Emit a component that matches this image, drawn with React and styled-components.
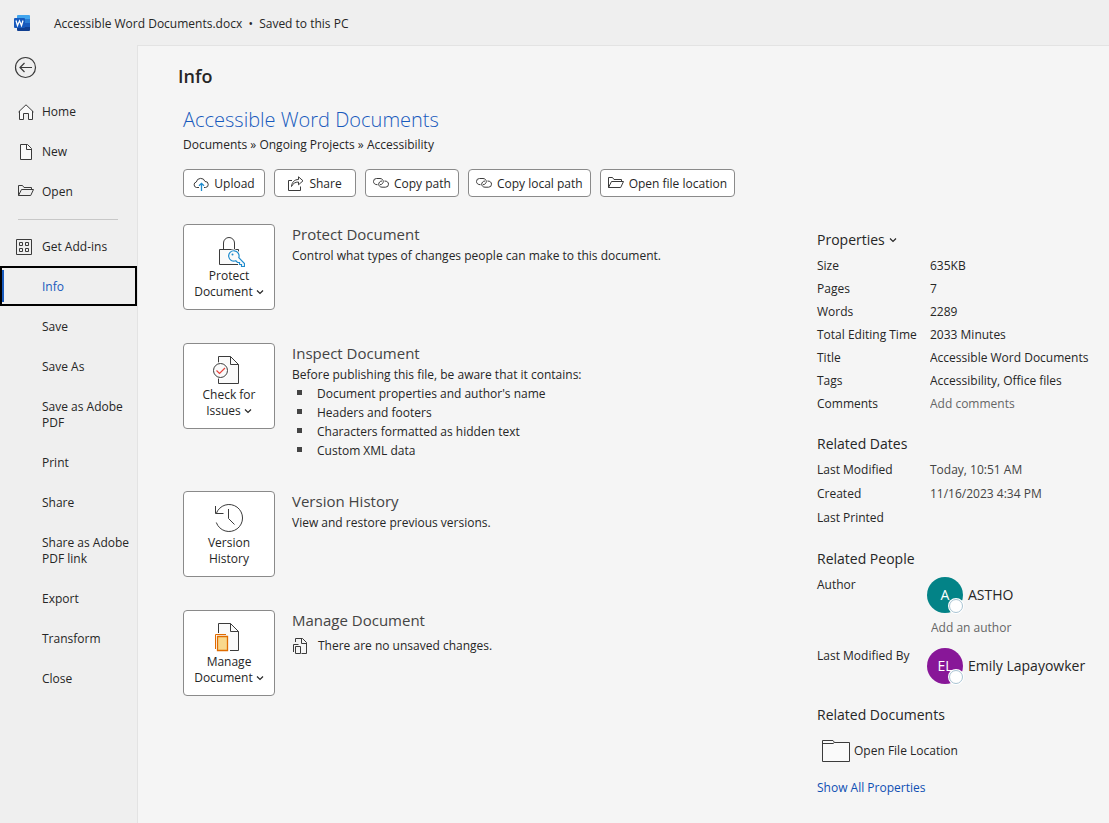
import React from "react";

import styled, { createGlobalStyle, css } from "styled-components";

const GlobalStyle = createGlobalStyle`
* {
  box-sizing: border-box;
}

body {
  margin: 0;
  background: #efefef;
  color: #262626;
  font-family: "Open Sans", "Noto Sans", sans-serif;
  font-size: 12px;
  line-height: 16px;
}

button, input {
  font: inherit;
  color: inherit;
}

h1, h2, h3, p, ul {
  margin: 0;
  padding: 0;
}
`;

const Page = styled.div`
display: flex;
flex-direction: column;
min-height: 100vh;
`;

const TitleBar = styled.header`
display: flex;
align-items: center;
gap: 24px;
height: 45px;
padding-left: 14px;
`;

const FileName = styled.span`
padding-top: 2px;
`;

const Body = styled.div`
display: flex;
flex: 1;
`;

const Sidebar = styled.nav`
display: flex;
flex-direction: column;
width: 137px;
flex-shrink: 0;
`;

const BackButton = styled.button`
display: flex;
align-items: center;
height: 46px;
padding: 0 14px 1px;
border: none;
background: none;
`;

const NavItem = styled.button`
display: grid;
grid-template-columns: 16px 1fr;
column-gap: 10px;
align-items: center;
min-height: 40px;
padding: 13px 4px 11px 16px;
border: none;
background: none;
text-align: left;

span {
  grid-column: 2;
}

svg {
  margin: -2px 0;
}

${(props) => props.$active && css`
  padding: 11px 4px 9px 14px;
  border: 2px solid black;
  color: #185abd;
  background: linear-gradient(#185abd, #185abd) 0 center / 2px 32px no-repeat;
`}
`;

const NavDivider = styled.hr`
width: 100px;
height: 1px;
margin: 8px 18px 6px;
border: none;
background: #c8c8c8;
`;

const Main = styled.main`
flex: 1;
padding: 18px 0 20px 45px;
border-top: 1px solid #e3e3e3;
border-left: 1px solid #e3e3e3;
background: #f5f5f5;
`;

const PageHeading = styled.h1`
margin-left: -5px;
font-size: 18px;
line-height: 24px;
font-weight: 600;
`;

const DocTitle = styled.h2`
margin-top: 16px;
color: #185abd;
font-size: 20px;
line-height: 32px;
font-weight: 300;
`;

const Breadcrumb = styled.p`
margin-top: 1px;
`;

const Toolbar = styled.div`
display: flex;
flex-wrap: wrap;
gap: 9px;
margin-top: 16px;
`;

const ToolButton = styled.button`
display: flex;
align-items: center;
justify-content: center;
gap: 5px;
min-width: 82px;
height: 28px;
padding: 2px 7px 0;
border: 1px solid #8a8a8a;
border-radius: 4px;
background: white;
white-space: nowrap;
`;

const Columns = styled.div`
display: grid;
grid-template-columns: 1fr 292px;
margin-top: 27px;
`;

const Sections = styled.div`
display: flex;
flex-direction: column;
gap: 31px;
`;

const Section = styled.section`
display: flex;
gap: 17px;
min-height: 88px;
`;

const Tile = styled.button`
display: flex;
flex-direction: column;
align-items: center;
justify-content: center;
width: 92px;
height: 86px;
flex-shrink: 0;
padding: 2px 0 0;
border: 1px solid #8a8a8a;
border-radius: 4px;
background: white;
font-weight: 500;
`;

const SectionTitle = styled.h3`
padding-bottom: 4px;
color: #444;
font-size: 15px;
line-height: 20px;
font-weight: 500;
`;

const IssueList = styled.ul`
padding-top: 1px;
list-style: none;

li {
  display: flex;
  align-items: center;
  gap: 15px;
  height: 19px;
  padding-left: 5px;
}

li::before {
  content: "";
  width: 5px;
  height: 5px;
  margin-bottom: 2px;
  background: #444;
}
`;

const Unsaved = styled.p`
display: flex;
align-items: center;
gap: 10px;
padding-top: 3px;
`;

const Side = styled.aside`
padding-top: 5px;
`;

const SideHeading = styled.h3`
padding-top: ${(props) => (props.$spaced ? "18px" : "0")};
font-size: 14px;
line-height: 22px;
font-weight: 400;

button {
  display: flex;
  align-items: center;
  gap: 4px;
  padding: 0;
  border: none;
  background: none;
}
`;

const PropTable = styled.table`
width: 100%;
margin-top: 3px;
border-collapse: collapse;

th, td {
  height: ${(props) => (props.$dates ? "24px" : "23px")};
  padding: 0;
  text-align: left;
  font-weight: 400;
}

th {
  width: 113px;
  white-space: nowrap;
}

td {
  color: ${(props) => (props.$dates ? "#444" : "#262626")};
}
`;

const Field = styled.input`
display: block;
width: 100%;
height: 16px;
padding: 0;
border: none;
background: none;

&::placeholder {
  color: #666;
  opacity: 1;
}
`;

const People = styled.div`
padding-bottom: 2px;
`;

const PersonRow = styled.div`
display: grid;
grid-template-columns: 110px 1fr;
padding-top: 7px;
`;

const Person = styled.div`
display: flex;
align-items: center;
gap: 5px;
font-size: 14px;
white-space: nowrap;
`;

const Avatar = styled.div`
position: relative;
width: 36px;
height: 36px;
flex-shrink: 0;
border-radius: 50%;
background: ${(props) => props.$color};
color: white;
font-size: 14px;
line-height: 36px;
text-align: center;

&::after {
  content: "";
  position: absolute;
  right: 0;
  bottom: 0;
  width: 12px;
  height: 12px;
  border: 1px solid #a9c4d3;
  border-radius: 50%;
  background: white;
  box-shadow: 0 0 0 1px white;
}
`;

const AuthorField = styled(Field)`
margin: 7px 0 5px 4px;
`;

const FolderButton = styled.button`
display: flex;
align-items: center;
gap: 4px;
margin-top: 14px;
padding: 0 0 0 5px;
border: none;
background: none;
`;

const ShowAll = styled.a`
display: inline-block;
margin-top: 18px;
color: #0f4fb3;
text-decoration: none;
`;

const ChevronSvg = styled.svg`
vertical-align: 1px;
`;

const Icon = ({ w = 16, h = 16, children }) => (
  <svg width={w} height={h} viewBox={`0 0 ${w} ${h}`} fill="none" stroke="#3b3b3b" aria-hidden="true">
    {children}
  </svg>
);

const WordLogo = () => (
  <svg width="16" height="16" viewBox="0 0 16 16" role="img" aria-label="Word">
    <path d="M4 0h11a1 1 0 0 1 1 1v3H3V1a1 1 0 0 1 1-1z" fill="#41a5ee" />
    <path d="M3 4h13v4H3z" fill="#2b7cd3" />
    <path d="M3 8h13v4H3z" fill="#185abd" />
    <path d="M3 12h13v3a1 1 0 0 1-1 1H4a1 1 0 0 1-1-1z" fill="#103f91" />
    <rect y="3" width="11" height="10" rx="1" fill="#185abd" />
    <path d="M2 5.500 3.500 10.500 5.500 5.800 7.500 10.500 9 5.500" fill="none" stroke="white" strokeWidth="1.300" />
  </svg>
);

const BackIcon = () => (
  <Icon w={23} h={23}>
    <circle cx="11.5" cy="11.5" r="10" strokeWidth="1.2" />
    <path d="M18 11.5H6M10.5 7 6 11.5l4.5 4.5" strokeWidth="1.2" />
  </Icon>
);

const HomeIcon = () => (
  <Icon w={20}>
    <path d="M3.500 7 10 1l6.500 6v8.500h-4v-6h-5v6h-4z" fill="#fafafa" stroke="none" />
    <path d="M2.500 8 10 .8 17.500 8" />
    <path d="M3.500 7v8.500h4v-6h5v6h4V7" />
  </Icon>
);

const NewIcon = () => (
  <Icon w={20}>
    <path d="M4.500.500h7l4 4v11h-11z" fill="#fafafa" />
    <path d="M10.500.500v5h5" />
  </Icon>
);

const openPath = "M.500 11.500v-10h4l1.500 2h7.500v2M.500 11.500l3-6h12l-2.800 6z";

const OpenIcon = () => (
  <Icon>
    <path d={openPath} />
  </Icon>
);

const NavOpenIcon = () => (
  <Icon w={20}>
    <path d={openPath} transform="translate(2 0)" />
  </Icon>
);

const AddinsIcon = () => (
  <Icon>
    <path d="M.5.5h15v15H.5zM3.500 3.500h3v3h-3zM9.500 3.500h3v3h-3zM3.500 9.500h3v3h-3zM9.500 9.500h3v3h-3z" />
  </Icon>
);

const UploadIcon = () => (
  <Icon>
    <path d="M6 11.500H3.500A2.800 2.800 0 0 1 3.300 6 4.500 4.500 0 0 1 12 5.500 3 3 0 0 1 12.500 11.500H11" />
    <path d="M8.500 15V7.500M6 9.800 8.500 7.300 11 9.800" stroke="#1e8bcd" strokeWidth="1.300" />
  </Icon>
);

const ShareIcon = () => (
  <Icon>
    <path d="M4 4.500H.500v10h12V10.500" />
    <path d="M3.500 10.500C4 6 6.500 3.500 10.500 3.500V.800L15 4.800 10.500 8.800V6C7 6 5 7.500 3.500 10.500z" />
  </Icon>
);

const LinkIcon = () => (
  <Icon>
    <path d="M4.500 8.700C1.800 8.700.5 7.300.5 5.500A3 3 0 0 1 3.500 2.500H7C9 2.500 10.300 4 10.300 5.500S9 8.700 7 8.700" />
    <path d="M11.500 5C14.200 5 15.500 6.400 15.500 8.200A3 3 0 0 1 12.500 11.200H9C7 11.200 5.700 9.700 5.700 8.200S7 5 9 5" />
  </Icon>
);

const Chevron = () => (
  <ChevronSvg width="8" height="6" viewBox="0 0 8 6" fill="none" stroke="#262626" strokeWidth="1.2" aria-hidden="true">
    <path d="M1 1.500 4 4.500 7 1.500" />
  </ChevronSvg>
);

const LockIcon = () => (
  <Icon w={32} h={32}>
    <path d="M10.500 13.500V7a5.500 5.500 0 0 1 11 0v6.500" />
    <path d="M6.500 13.500h19v15h-19z" fill="#fafafa" />
    <path d="M22.800 24.800a5.200 5.200 0 1 1 3-3.200L31.500 27.500v3h-3v-2h-2v-2h-2z" fill="white" stroke="white" strokeWidth="3" />
    <path d="M22.800 24.800a5.200 5.200 0 1 1 3-3.200L31.500 27.500v3h-3v-2h-2v-2h-2z" fill="#fafafa" stroke="#1e8bcd" strokeWidth="1.200" />
    <circle cx="19.500" cy="18.500" r="1" fill="#1e8bcd" stroke="none" />
  </Icon>
);

const InspectIcon = () => (
  <Icon w={32} h={32}>
    <path d="M5.500 1.500h12l8 8v19h-20z" fill="#fafafa" />
    <path d="M17.500 1.500v8h8" />
    <circle cx="7.500" cy="15.500" r="8.500" fill="white" stroke="none" />
    <circle cx="7.500" cy="15.500" r="7" fill="#fafafa" />
    <path d="M3.500 15.500 6.500 18.500 12 13" stroke="#e8433c" strokeWidth="1.200" />
  </Icon>
);

const HistoryIcon = () => (
  <Icon w={32} h={32}>
    <path d="M2.500 3v7.500h8" />
    <path d="M3.300 10.500A13.500 13.500 0 1 1 3.300 19.500" />
    <path d="M15.500 6v9.500l6 6" />
  </Icon>
);

const ManageIcon = () => (
  <Icon w={32} h={32}>
    <path d="M5.500 1.500h12l8 8v19h-20z" fill="#fafafa" stroke="none" />
    <path d="M5.500 11V1.500h12l8 8v19H17" />
    <path d="M17.500 1.500v8h8" />
    <path d="M2.500 27V12.500H13" stroke="#e06c00" />
    <path d="M4.500 14.500h10v14h-10z" fill="#f9d88c" stroke="#e06c00" strokeWidth="1.300" />
  </Icon>
);

const DraftIcon = () => (
  <Icon w={16} h={18}>
    <path d="M3.500 5V1.500h7l4 4v11h-5M9.500 1.500v5h5" />
    <path d="M1.500 15V7.500h5M3.500 9.500h5v7h-5z" />
  </Icon>
);

const FolderIcon = () => (
  <Icon w={28} h={22}>
    <path d="M.5.500h10.500l1.500 2h15v19H.500z" fill="#fafafa" />
    <path d="M.5 3.500h10.500l1.500-1" />
  </Icon>
);

const fileItems = [
  "Save",
  "Save As",
  "Save as Adobe PDF",
  "Print",
  "Share",
  "Share as Adobe PDF link",
  "Export",
  "Transform",
  "Close",
];

const issues = [
  "Document properties and author's name",
  "Headers and footers",
  "Characters formatted as hidden text",
  "Custom XML data",
];

const stats = [
  ["Size", "635KB"],
  ["Pages", "7"],
  ["Words", "2289"],
  ["Total Editing Time", "2033 Minutes"],
];

const dates = [
  ["Last Modified", "Today, 10:51 AM"],
  ["Created", "11/16/2023 4:34 PM"],
  ["Last Printed", ""],
];

const Navigation = () => (
  <Sidebar>
    <BackButton aria-label="Back"><BackIcon /></BackButton>
    <NavItem><HomeIcon /><span>Home</span></NavItem>
    <NavItem><NewIcon /><span>New</span></NavItem>
    <NavItem><NavOpenIcon /><span>Open</span></NavItem>
    <NavDivider />
    <NavItem><AddinsIcon /><span>Get Add-ins</span></NavItem>
    <NavItem $active aria-current="page"><span>Info</span></NavItem>
    {fileItems.map((item) => (
      <NavItem key={item}><span>{item}</span></NavItem>
    ))}
  </Sidebar>
);

const Properties = () => (
  <Side>
    <SideHeading><button>Properties <Chevron /></button></SideHeading>
    <PropTable>
      <tbody>
        {stats.map(([name, value]) => (
          <tr key={name}><th scope="row">{name}</th><td>{value}</td></tr>
        ))}
        <tr>
          <th scope="row"><label htmlFor="title">Title</label></th>
          <td><Field id="title" defaultValue="Accessible Word Documents" /></td>
        </tr>
        <tr>
          <th scope="row"><label htmlFor="tags">Tags</label></th>
          <td><Field id="tags" defaultValue="Accessibility, Office files" /></td>
        </tr>
        <tr>
          <th scope="row"><label htmlFor="comments">Comments</label></th>
          <td><Field id="comments" placeholder="Add comments" /></td>
        </tr>
      </tbody>
    </PropTable>

    <SideHeading $spaced>Related Dates</SideHeading>
    <PropTable $dates>
      <tbody>
        {dates.map(([name, value]) => (
          <tr key={name}><th scope="row">{name}</th><td>{value}</td></tr>
        ))}
      </tbody>
    </PropTable>

    <SideHeading $spaced>Related People</SideHeading>
    <People>
      <PersonRow>
        <label htmlFor="author">Author</label>
        <div>
          <Person><Avatar $color="#038387">A</Avatar>ASTHO</Person>
          <AuthorField id="author" placeholder="Add an author" />
        </div>
      </PersonRow>
      <PersonRow>
        <span>Last Modified By</span>
        <Person><Avatar $color="#881798">EL</Avatar>Emily Lapayowker</Person>
      </PersonRow>
    </People>

    <SideHeading $spaced>Related Documents</SideHeading>
    <FolderButton><FolderIcon />Open File Location</FolderButton>
    <ShowAll href="#properties">Show All Properties</ShowAll>
  </Side>
);

const App = () => {
  return (
    <>
      <GlobalStyle />
      <Page>
        <TitleBar>
          <WordLogo />
          <FileName>Accessible Word Documents.docx &nbsp;•&nbsp; Saved to this PC</FileName>
        </TitleBar>

        <Body>
          <Navigation />

          <Main>
            <PageHeading>Info</PageHeading>
            <DocTitle>Accessible Word Documents</DocTitle>
            <Breadcrumb>Documents » Ongoing Projects » Accessibility</Breadcrumb>

            <Toolbar>
              <ToolButton><UploadIcon />Upload</ToolButton>
              <ToolButton><ShareIcon />Share</ToolButton>
              <ToolButton><LinkIcon />Copy path</ToolButton>
              <ToolButton><LinkIcon />Copy local path</ToolButton>
              <ToolButton><OpenIcon />Open file location</ToolButton>
            </Toolbar>

            <Columns>
              <Sections>
                <Section>
                  <Tile>
                    <LockIcon />
                    <span>Protect</span>
                    <span>Document <Chevron /></span>
                  </Tile>
                  <div>
                    <SectionTitle>Protect Document</SectionTitle>
                    <p>Control what types of changes people can make to this document.</p>
                  </div>
                </Section>

                <Section>
                  <Tile>
                    <InspectIcon />
                    <span>Check for</span>
                    <span>Issues <Chevron /></span>
                  </Tile>
                  <div>
                    <SectionTitle>Inspect Document</SectionTitle>
                    <p>Before publishing this file, be aware that it contains:</p>
                    <IssueList>
                      {issues.map((issue) => <li key={issue}>{issue}</li>)}
                    </IssueList>
                  </div>
                </Section>

                <Section>
                  <Tile>
                    <HistoryIcon />
                    <span>Version</span>
                    <span>History</span>
                  </Tile>
                  <div>
                    <SectionTitle>Version History</SectionTitle>
                    <p>View and restore previous versions.</p>
                  </div>
                </Section>

                <Section>
                  <Tile>
                    <ManageIcon />
                    <span>Manage</span>
                    <span>Document <Chevron /></span>
                  </Tile>
                  <div>
                    <SectionTitle>Manage Document</SectionTitle>
                    <Unsaved><DraftIcon />There are no unsaved changes.</Unsaved>
                  </div>
                </Section>
              </Sections>

              <Properties />
            </Columns>
          </Main>
        </Body>
      </Page>
    </>
  );
};

export default App;
